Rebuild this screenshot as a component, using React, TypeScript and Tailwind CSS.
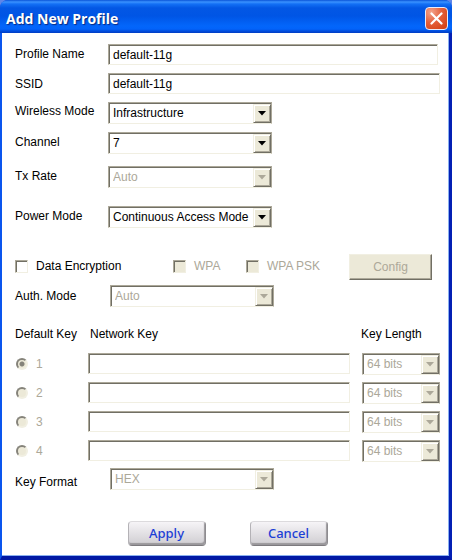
import { ReactNode } from "react"
import clsx from "clsx"

const keys = ["1", "2", "3", "4"]

function TextField({
  id,
  label,
  defaultValue,
  disabled
}: {
  id: string,
  label?: string,
  defaultValue?: string,
  disabled?: boolean
}) {
  return (
    <input
      id={id}
      type="text"
      aria-label={label}
      defaultValue={defaultValue}
      disabled={disabled}
      className="
        h-[21px]
        min-w-0
        flex-1
        border
        border-t-[#aca899]
        border-l-[#aca899]
        border-r-[#f1efe2]
        border-b-[#f1efe2]
        bg-white
        px-1
        text-black
        shadow-[inset_1px_1px_0_#716f64]
        outline-none
      "
    />
  )
}

function SelectField({
  id,
  label,
  value,
  disabled,
  className
}: {
  id: string,
  label?: string,
  value: string,
  disabled?: boolean,
  className: string
}) {
  return (
    <div
      className={clsx(
        "relative h-[22px] shrink-0 border border-t-[#aca899] border-l-[#aca899] border-r-[#aca899] border-b-[#f1efe2] bg-white shadow-[inset_1px_1px_0_#716f64]",
        className
      )}
    >
      <select
        id={id}
        aria-label={label}
        defaultValue={value}
        disabled={disabled}
        className="block h-full w-full appearance-none bg-transparent pl-1 pr-5 text-black opacity-100 outline-none disabled:text-[#aca899]"
      >
        <option value={value}>{value}</option>
      </select>
      <span
        className="
          pointer-events-none
          absolute
          top-px
          right-0
          bottom-0
          flex
          w-[18px]
          items-center
          justify-center
          border
          border-t-[#f1efe2]
          border-l-[#f1efe2]
          border-r-[#716f64]
          border-b-[#716f64]
          bg-[#ece9d8]
          shadow-[inset_1px_1px_0_#fff,inset_-1px_-1px_0_#aca899]
        "
      >
        <svg
          width="8"
          height="5"
          viewBox="0 0 8 5"
          className={disabled ? "fill-[#aca899]" : "fill-black"}
        >
          <path d="M0 0h8L4 4.5z" />
        </svg>
      </span>
    </div>
  )
}

function CheckField({
  id,
  children,
  disabled,
  className
}: {
  id: string,
  children: ReactNode,
  disabled?: boolean,
  className?: string
}) {
  return (
    <div className={clsx("flex shrink-0 items-center pb-0.5", className)}>
      <input
        id={id}
        type="checkbox"
        disabled={disabled}
        className="
          size-[13px]
          appearance-none
          border
          border-t-[#aca899]
          border-l-[#aca899]
          border-r-[#f1efe2]
          border-b-[#f1efe2]
          bg-white
          shadow-[inset_1px_1px_0_#716f64]
          disabled:bg-[#ece9d8]
        "
      />
      <label
        htmlFor={id}
        className={clsx("pl-2 whitespace-nowrap", disabled && "text-[#aca899]")}
      >
        {children}
      </label>
    </div>
  )
}

function Row({
  id,
  label,
  children,
  className,
  labelClassName
}: {
  id: string,
  label: string,
  children: ReactNode,
  className?: string,
  labelClassName?: string
}) {
  return (
    <div className={clsx("flex items-center", className)}>
      <label htmlFor={id} className={clsx("w-[93px] shrink-0 whitespace-nowrap", labelClassName)}>
        {label}
      </label>
      {children}
    </div>
  )
}

function ImageButton({ type, children }: { type: "submit" | "button", children: string }) {
  return (
    <button
      type={type}
      className="
        h-[25px]
        w-[78px]
        rounded
        border
        border-t-[#dcdadd]
        border-l-[#b4b2b6]
        border-r-[#8e8c90]
        border-b-[#7c7a7e]
        bg-linear-to-b
        from-[#f6f4f7]
        to-[#cfcdd1]
        pb-0.5
        font-['Noto_Sans',sans-serif]
        text-[13px]
        leading-5
        font-medium
        text-[#1c3fd6]
        shadow-[inset_-1px_-2px_1px_#99979b]
      "
    >
      {children}
    </button>
  )
}

export default function App() {
  return (
    <div className="bg-[#5f86e8] font-['Liberation_Sans',Arial,sans-serif] text-xs text-black">
      <div className="overflow-hidden rounded-t-lg bg-[#0a4be0]">
        <header
          className="
            flex
            h-[33px]
            items-center
            justify-between
            bg-[linear-gradient(to_bottom,#0a54d8_0,#3a92ff_2px,#1370f5_4px,#0357e4_8px,#0055e5_16px,#0366fb_26px,#0263fa_29px,#0144d0_32px,#003ec4_33px)]
            pt-1
            pr-1
            pl-1.5
          "
        >
          <h1 className="font-['Open_Sans',sans-serif] text-sm font-bold text-white [text-shadow:1px_1px_1px_#0a2a80]">
            Add New Profile
          </h1>
          <button
            type="button"
            aria-label="Close"
            className="
              flex
              size-[23px]
              items-center
              justify-center
              rounded
              border
              border-[#e8ecfb]
              bg-[radial-gradient(circle_at_25%_20%,#f3a48c_0,#e4603c_45%,#d23c0c_100%)]
            "
          >
            <svg width="13" height="13" viewBox="0 0 13 13" className="stroke-white" strokeWidth="2.2" strokeLinecap="round">
              <path d="M1.5 1.5l10 10M11.5 1.5l-10 10" />
            </svg>
          </button>
        </header>
        <form
          onSubmit={(e) => e.preventDefault()}
          className="
            border-l-2
            border-r-3
            border-b-4
            border-l-[#0a55ee]
            border-r-[#0420b4]
            border-b-[#0118a4]
            bg-[#0a55ee]
          "
        >
          <div className="border-r border-b border-[#8ab0f0] bg-white pt-[11px] pr-2 pb-[9px] pl-[13px]">
            <Row id="profile" label="Profile Name" className="pr-0.5" labelClassName="pb-0.5">
              <TextField id="profile" defaultValue="default-11g" />
            </Row>
            <Row id="ssid" label="SSID" className="mt-2">
              <TextField id="ssid" defaultValue="default-11g" />
            </Row>
            <Row id="wireless_mode" label="Wireless Mode" className="mt-2" labelClassName="pb-1">
              <SelectField id="wireless_mode" value="Infrastructure" className="w-[164px]" />
            </Row>
            <Row id="channel" label="Channel" className="mt-2" labelClassName="pb-0.5">
              <SelectField id="channel" value="7" className="w-[164px]" />
            </Row>
            <Row id="tx_rate" label="Tx Rate" className="mt-3" labelClassName="pb-0.5">
              <SelectField id="tx_rate" value="Auto" disabled className="w-[164px]" />
            </Row>
            <Row id="power_mode" label="Power Mode" className="mt-[18px]" labelClassName="pb-0.5">
              <SelectField id="power_mode" value="Continuous Access Mode" className="w-[164px]" />
            </Row>

            <div className="mt-[26px] flex items-center pr-2">
              <CheckField id="encryption" className="w-[158px]">Data Encryption</CheckField>
              <CheckField id="wpa" disabled className="w-[73px]">WPA</CheckField>
              <CheckField id="wpa_psk" disabled>WPA PSK</CheckField>
              <button
                type="button"
                disabled
                className="
                  ml-auto
                  h-[26px]
                  w-[83px]
                  border
                  border-t-[#f1efe2]
                  border-l-[#f1efe2]
                  border-r-[#716f64]
                  border-b-[#716f64]
                  bg-[#ece9d8]
                  text-[#aca899]
                  shadow-[inset_-1px_-1px_0_#aca899]
                "
              >
                Config
              </button>
            </div>
            <Row id="auth_mode" label="Auth. Mode" className="mt-[5px]">
              <SelectField id="auth_mode" value="Auto" disabled className="ml-0.5 w-[164px]" />
            </Row>

            <div className="mt-[17px] flex h-5 items-center">
              <span className="w-[75px]">Default Key</span>
              <span className="flex-1">Network Key</span>
              <span className="w-[79px]">Key Length</span>
            </div>
            <div className="mt-[9px] flex flex-col gap-[7px]">
              {keys.map((key) => (
                <div key={key} className="flex h-[22px] items-start">
                  <div className="flex h-[21px] w-[73px] items-center">
                    <input
                      id={`key_${key}`}
                      type="radio"
                      name="default_key"
                      disabled
                      defaultChecked={key === "1"}
                      className="
                        ml-px
                        size-3
                        appearance-none
                        rounded-full
                        border-2
                        border-t-[#85837a]
                        border-l-[#85837a]
                        border-r-[#f1efe2]
                        border-b-[#f1efe2]
                        bg-[#ece9d8]
                        checked:bg-[radial-gradient(circle,#85837a_0,#85837a_2px,#ece9d8_3px)]
                      "
                    />
                    <label htmlFor={`key_${key}`} className="pl-2 text-[#aca899]">{key}</label>
                  </div>
                  <TextField id={`network_key_${key}`} label={`Network Key ${key}`} disabled />
                  <SelectField
                    id={`key_length_${key}`}
                    label={`Key Length ${key}`}
                    value="64 bits"
                    disabled
                    className="ml-3 w-[78px]"
                  />
                </div>
              ))}
            </div>
            <Row id="key_format" label="Key Format" className="mt-1.5" labelClassName="pt-1.5">
              <SelectField id="key_format" value="HEX" disabled className="ml-0.5 w-[164px]" />
            </Row>

            <div className="mt-[31px] flex justify-center gap-11">
              <ImageButton type="submit">Apply</ImageButton>
              <ImageButton type="button">Cancel</ImageButton>
            </div>
          </div>
        </form>
      </div>
    </div>
  )
}
